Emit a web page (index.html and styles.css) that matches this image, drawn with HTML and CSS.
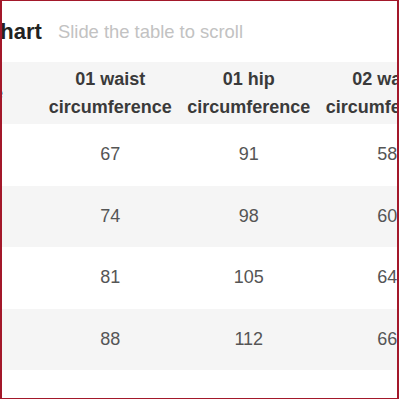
FILE: index.html
```html
<!DOCTYPE html>
<html>
<head>
<meta charset="utf-8">
<link rel="stylesheet" href="styles.css">
</head>
<body>
<div class="frame">
  <div class="scroll">
    <div class="titlebar">
      <span class="title">Size chart</span>
      <span class="hint">Slide the table to scroll</span>
    </div>
    <div class="table">
      <div class="row head">
        <div class="cell">Size</div>
        <div class="cell">01 waist<br>circumference</div>
        <div class="cell">01 hip<br>circumference</div>
        <div class="cell">02 waist<br>circumference</div>
      </div>
      <div class="row">
        <div class="cell">S</div>
        <div class="cell">67</div>
        <div class="cell">91</div>
        <div class="cell">58</div>
      </div>
      <div class="row alt">
        <div class="cell">M</div>
        <div class="cell">74</div>
        <div class="cell">98</div>
        <div class="cell">60</div>
      </div>
      <div class="row">
        <div class="cell">L</div>
        <div class="cell">81</div>
        <div class="cell">105</div>
        <div class="cell">64</div>
      </div>
      <div class="row alt">
        <div class="cell">XL</div>
        <div class="cell">88</div>
        <div class="cell">112</div>
        <div class="cell">66</div>
      </div>
    </div>
  </div>
</div>
</body>
</html>
```
FILE: styles.css
```css
html, body {
  margin: 0;
  padding: 0;
  background: #ffffff;
}
.frame {
  width: 399px;
  height: 399px;
  box-sizing: border-box;
  border-top: 1px solid #a3182a;
  border-left: 2px solid #a3182a;
  border-right: 2px solid #a3182a;
  border-bottom: 1px solid #a3182a;
  overflow: hidden;
  font-family: "Liberation Sans", Arial, sans-serif;
}
.scroll {
  margin-left: -73px;
  width: 600px;
}
.titlebar {
  height: 61px;
  display: flex;
  align-items: center;
  padding-left: 9px;
  gap: 16px;
  white-space: nowrap;
}
.title {
  font-size: 22px;
  font-weight: bold;
  color: #222222;
}
.hint {
  font-size: 18.4px;
  color: #c2c2c2;
}
.table {
  display: flex;
  flex-direction: column;
}
.row {
  display: grid;
  grid-template-columns: 112px 138.5px 138.5px 138.5px;
  height: 61.5px;
  align-items: center;
  text-align: center;
  font-size: 18px;
  color: #555555;
}
.row.head {
  height: 62px;
  background: #f5f5f5;
  font-weight: bold;
  color: #3a3a3a;
  line-height: 28px;
}
.row.alt {
  background: #f5f5f5;
}
.cell {
  white-space: nowrap;
}
```
